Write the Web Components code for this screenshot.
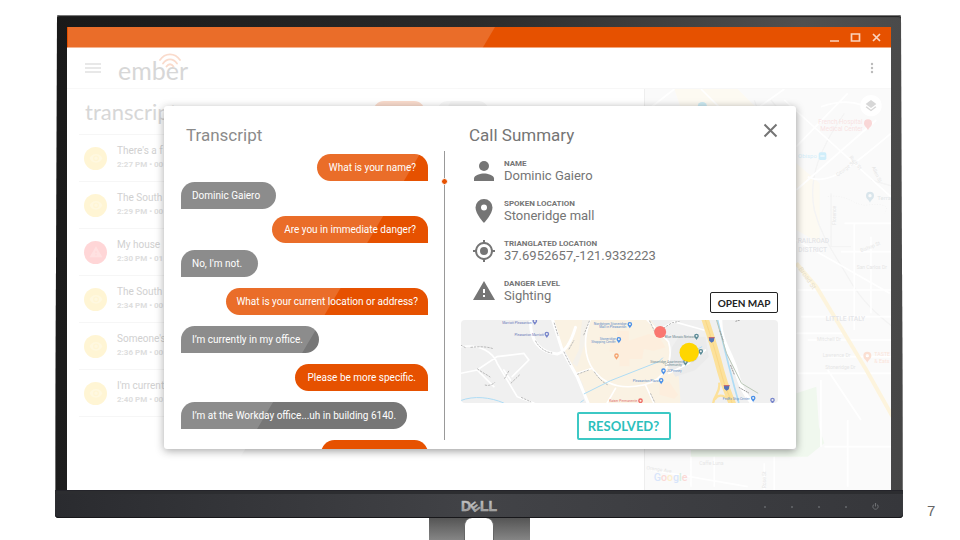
<!DOCTYPE html>
<html lang="en">
<head>
<meta charset="utf-8">
<meta name="viewport" content="width=device-width, initial-scale=1">
<title>ember</title>
<style>
    body { margin: 0; background: #fff; font-family: Roboto, "Liberation Sans", sans-serif; color: #777; }
</style>
</head>
<body>
<ember-slide page="7">
    <dell-monitor>
        <ember-window>
            <ember-header slot="header"></ember-header>
            <call-list slot="list" heading="transcripts">
                <call-item label="There's a f" meta="2:27 PM • 00"></call-item>
                <call-item label="The South" meta="2:29 PM • 00"></call-item>
                <call-item label="My house" meta="2:30 PM • 01" level="danger"></call-item>
                <call-item label="The South" meta="2:34 PM • 00"></call-item>
                <call-item label="Someone's" meta="2:36 PM • 00"></call-item>
                <call-item label="I'm current" meta="2:40 PM • 00"></call-item>
            </call-list>
            <city-map slot="map"></city-map>
            <call-dialog slot="dialog">
                <chat-bubble slot="chat" from="operator">What is your name?</chat-bubble>
                <chat-bubble slot="chat" from="caller" gap="tight">Dominic Gaiero</chat-bubble>
                <chat-bubble slot="chat" from="operator" gap="close">Are you in immediate danger?</chat-bubble>
                <chat-bubble slot="chat" from="caller" gap="close">No, I'm not.</chat-bubble>
                <chat-bubble slot="chat" from="operator" snug>What is your current location or address?</chat-bubble>
                <chat-bubble slot="chat" from="caller">I’m currently in my office.</chat-bubble>
                <chat-bubble slot="chat" from="operator">Please be more specific.</chat-bubble>
                <chat-bubble slot="chat" from="caller" snug>I’m at the Workday office...uh in building 6140.</chat-bubble>
                <chat-bubble slot="chat" from="operator" empty></chat-bubble>
                <call-fact icon="person" label="NAME">Dominic Gaiero</call-fact>
                <call-fact icon="place" label="SPOKEN LOCATION">Stoneridge mall</call-fact>
                <call-fact icon="target" label="TRIANGLATED LOCATION">37.6952657,-121.9332223</call-fact>
                <call-fact icon="warning" label="DANGER LEVEL">Sighting</call-fact>
            </call-dialog>
        </ember-window>
    </dell-monitor>
</ember-slide>

<script>
const ICONS = {
    person: '<circle cx="12" cy="7" r="5"/><path d="M2 22v-2.500c0-3.300 6.600-5 10-5s10 1.700 10 5V22z"/>',
    place: '<path fill-rule="evenodd" d="M12 0a8.500 8.500 0 0 0-8.500 8.500C3.500 15 12 24 12 24s8.500-9 8.500-15.500A8.500 8.500 0 0 0 12 0zm0 11.500a3 3 0 1 1 0-6 3 3 0 0 1 0 6z"/>',
    target: '<path d="M12 8a4 4 0 1 0 0 8 4 4 0 0 0 0-8zm8.940 3A9 9 0 0 0 13 3.060V1h-2v2.060A9 9 0 0 0 3.060 11H1v2h2.060A9 9 0 0 0 11 20.940V23h2v-2.060A9 9 0 0 0 20.940 13H23v-2zM12 19a7 7 0 1 1 0-14 7 7 0 0 1 0 14z"/>',
    warning: '<path d="M1 21h22L12 2zm12-3h-2v-2h2zm0-4h-2v-4h2z"/>',
    eye: '<path d="M12 5C7 5 2.700 8.100 1 12.500 2.700 16.900 7 20 12 20s9.300-3.100 11-7.500C21.300 8.100 17 5 12 5zm0 12.500a5 5 0 1 1 0-10 5 5 0 0 1 0 10zm0-8a3 3 0 1 0 0 6 3 3 0 0 0 0-6z"/>'
};

function icon(name) {
    return `<svg viewBox="0 0 24 24" fill="currentColor" aria-hidden="true">${ICONS[name]}</svg>`;
}

class EmberElement extends HTMLElement {
    constructor() {
        super();
        this.attachShadow({mode: 'open'});
    }

    connectedCallback() {
        this.shadowRoot.innerHTML = this.template();
    }
}

class EmberSlide extends EmberElement {
    template() {
        return `
            <style>
                :host { display: grid; grid-template-columns: 55px minmax(0, 1fr) 57px; height: 100vh;
                    min-height: 540px; box-sizing: border-box; padding-top: 15px; overflow: hidden; }
                .stage { grid-column: 2; }
                .page { align-self: end; padding: 0 0 20px 24px; font: 15px/18px "Liberation Sans", sans-serif; color: #666; }
            </style>
            <div class="stage"><slot></slot></div>
            <div class="page">${this.getAttribute('page')}</div>
        `;
    }
}

class DellMonitor extends EmberElement {
    template() {
        return `
            <style>
                :host { display: flex; flex-direction: column; height: 100%; position: relative; }
                .case { flex: 1; min-height: 0; display: flex; flex-direction: column; position: relative;
                    border-radius: 5px 5px 4px 4px; background: linear-gradient(100deg, #191919, #2b2b2b 45%, #505050 80%, #454545);
                    box-shadow: inset 0 0 0 1px #777, inset 0 2px 1px #222;
                    clip-path: polygon(2px 0, calc(100% - 2px) 0, 100% 100%, 0 100%); }
                .screen { flex: 1; min-height: 0; margin: 12px 12px 0 12px; overflow: hidden; }
                .chin { height: 28px; display: grid; grid-template-columns: 1fr auto 1fr; align-items: center;
                    background: linear-gradient(90deg, #2a2b2f, #424347 50%, #36373b); border-radius: 0 0 4px 4px;
                    border-top: 1px solid #24242a; box-sizing: border-box; box-shadow: inset 0 3px #2c2d30, inset 0 -1px #17171a; }
                .logo { width: 38px; height: 20px; margin-top: 3px; overflow: visible; }
                .keys { justify-self: end; display: flex; align-items: center; gap: 25px; padding: 4px 24px 0 0; }
                .keys i { width: 2px; height: 2px; border-radius: 50%; background: #66686c; }
                .keys svg { width: 7px; height: 7px; }
                .stand { height: 22px; width: 101px; margin-left: 374px; background: linear-gradient(#555, #858585); display: flex; justify-content: center; }
                .stand i { width: 28px; margin-right: 2px; background: #fff; border-radius: 8px 8px 0 0; border: solid #666; border-width: 0 1px; }
                /* light falling across the glass */
                .glare { position: absolute; inset: 12px 0 50px 13px; background: #fff; opacity: .16; pointer-events: none;
                    clip-path: polygon(0 0, 427px 0, 153px 100%, 0 100%); }
            </style>
            <div class="case">
                <div class="screen"><slot></slot></div>
                <div class="chin">
                    <span></span>
                    <svg class="logo" viewBox="0 0 38 20" role="img" aria-label="Dell">
                        <defs><linearGradient id="s" x2="0" y2="1"><stop offset="0" stop-color="#d5d5d5"/><stop offset="1" stop-color="#8c8c8c"/></linearGradient></defs>
                        <g fill="url(#s)" stroke="#b0b0b0" stroke-width=".5" font-family="Liberation Sans, sans-serif" font-weight="bold" font-size="14">
                            <text x="1" y="15">D</text>
                            <text x="11" y="15" font-size="12" transform="rotate(-38 15 11)">E</text>
                            <text x="20" y="15">LL</text>
                        </g>
                    </svg>
                    <div class="keys"><i></i><i></i><i></i><i></i>
                        <svg viewBox="0 0 8 8" fill="none" stroke="#77797d"><path d="M2.500 1.500a3 3 0 1 0 3 0M4 0v4"/></svg>
                    </div>
                </div>
            </div>
            <div class="stand"><i></i></div>
            <div class="glare"></div>
        `;
    }
}

class EmberWindow extends EmberElement {
    template() {
        return `
            <style>
                :host { display: flex; flex-direction: column; height: 100%; position: relative; background: #fff; }
                .bar { height: 20px; flex: none; background: #e65100; border-bottom: 1px solid #f3a67c; display: flex; justify-content: flex-end;
                    align-items: center; gap: 10px; padding-right: 9px; }
                .bar button { all: unset; width: 11px; height: 11px; display: flex; }
                .bar svg { width: 11px; height: 11px; fill: none; stroke: #fbd3bd; stroke-width: 1.700; }
                .body { flex: 1; min-height: 0; display: grid; grid-template-columns: 70fr 30fr; }
            </style>
            <div class="bar">
                <button aria-label="Minimize"><svg viewBox="0 0 11 11"><path d="M1 9h9"/></svg></button>
                <button aria-label="Maximize"><svg viewBox="0 0 11 11"><path d="M1.500 2h8v7h-8z"/></svg></button>
                <button aria-label="Close"><svg viewBox="0 0 11 11"><path d="M2 2l7 7M9 2l-7 7"/></svg></button>
            </div>
            <slot name="header"></slot>
            <div class="body">
                <slot name="list"></slot>
                <slot name="map"></slot>
            </div>
            <slot name="dialog"></slot>
        `;
    }
}

class EmberHeader extends EmberElement {
    template() {
        return `
            <style>
                :host { display: flex; align-items: center; height: 41px; flex: none; padding: 0 17px 0 18px;
                    border-bottom: 1px solid #f7f7f7; box-sizing: border-box; }
                button { all: unset; display: flex; }
                .brand { position: relative; margin-left: 17px; padding-top: 4px; font: 25px/30px Lato, sans-serif; color: #d0d0d0; }
                .brand svg { position: absolute; left: 41px; top: 2px; width: 22px; height: 16px; }
                .more { margin-left: auto; }
            </style>
            <button aria-label="Menu"><svg width="16" height="12" stroke="#dcdcdc" stroke-width="1.500"><path d="M0 2h16M0 6h16M0 10h16"/></svg></button>
            <div class="brand">ember
                <svg viewBox="0 0 22 16" fill="none" stroke="#f9d5c3" stroke-width="1.800" stroke-linecap="round"><path d="M1 7C6-.500 16-.500 21 7M4 10.500c4-5.500 10-5.500 14 0M7.500 13.500c2-3 5-3 7 0"/></svg>
            </div>
            <button class="more" aria-label="More"><svg width="4" height="12" fill="#bbb"><circle cx="2" cy="2" r="1.200"/><circle cx="2" cy="6" r="1.200"/><circle cx="2" cy="10" r="1.200"/></svg></button>
        `;
    }
}

class CallList extends EmberElement {
    template() {
        return `
            <style>
                :host { display: block; min-width: 0; padding: 0 12px; }
                .top { display: flex; align-items: center; gap: 12px; height: 46px; padding-left: 6px; border-bottom: 1px solid #f5f5f5;
                    box-sizing: border-box; }
                h1 { margin: 0; width: 276px; font: 22px/28px Lato, sans-serif; color: #d0d0d0; }
                .top i { width: 52px; height: 22px; border-radius: 11px; background: #f9d5c3; }
                .top i + i { background: #f6f6f6; }
            </style>
            <div class="top"><h1>${this.getAttribute('heading')}</h1><i></i><i></i></div>
            <slot></slot>
        `;
    }
}

class CallItem extends EmberElement {
    template() {
        const danger = this.getAttribute('level') === 'danger';
        return `
            <style>
                :host { display: flex; align-items: center; gap: 10px; height: 47px; padding-left: 5px; box-sizing: border-box;
                    border-bottom: 1px solid #f5f5f5; }
                .mark { width: 23px; height: 23px; border-radius: 50%; display: grid; place-items: center;
                    background: ${danger ? '#ffcfd0' : '#fff4cc'}; color: ${danger ? '#ffdcdc' : '#fff7da'}; }
                .mark svg { width: 14px; height: 14px; }
                b { display: block; font: 10px/14px Roboto, sans-serif; color: #c8c8c8; }
                small { display: block; font: bold 8px/14px Roboto, sans-serif; color: #d8d8d8; }
            </style>
            <div class="mark">${icon(danger ? 'warning' : 'eye')}</div>
            <div><b>${this.getAttribute('label')}</b><small>${this.getAttribute('meta')}</small></div>
        `;
    }
}

class CityMap extends EmberElement {
    template() {
        return `
            <style>
                :host { display: block; min-width: 0; min-height: 0; overflow: hidden; position: relative; border-left: 1px solid #eee; }
                svg { display: block; width: 100%; height: 100%; opacity: .85; }
                text { font-family: Roboto, sans-serif; }
            </style>
            <svg viewBox="12 27 741 1203" preserveAspectRatio="xMinYMin slice">
                <path fill="#fafafa" d="M12 27h800v1230H12z"/>
                <path fill="#fdf9f0" d="M100 27h190l60 60H120zM466 250l70 60v180l-70-40z"/>
                <path fill="#eef7ec" d="M466 940l60-20 8 120 16 50-50 40H150v-20h316z"/>
                <g fill="none" stroke="#f2f2f2" stroke-width="4">
                    <path d="M610 100c-70 100-110 190-90 290 20 80 60 130 100 200 50 90 110 130 160 170M390 60l40 50M690 300l70 20M570 340v160h60M340 60l20 60"/>
                </g>
                <g fill="none" stroke="#fff" stroke-width="5">
                    <path d="M20 90L100 27M180 27l160 160M300 120L430 27M430 60l330 300M466 330l240-210M466 200L620 40M540 80c60-20 120-20 160 20M500 290c60 30 120-20 250-130M640 430v320M470 630h290M480 710h280M500 780h260M560 830h200M470 880h290M560 870l100 150M610 430h140M600 515h150M690 470v230M466 480l280 160M540 900v200M30 1170l290 50M150 1130v90M220 1130v90M370 1150v80M400 1130v100M550 1100h200M620 1020v200M466 760h140"/>
                </g>
                <path fill="none" stroke="#fdf3d8" stroke-width="12" d="M466 550l60 70 60 100 90 150 90 160"/>
                <path fill="none" stroke="#eee" stroke-width="2" stroke-dasharray="4 4" d="M560 350c60-10 80 30 120 25s70 0 50 25"/>
                <g fill="#e2e2e2" font-size="15">
                    <text transform="translate(590 290) rotate(-38)">George St</text>
                    <text transform="translate(625 232) rotate(52)">Ruth St</text>
                    <text transform="translate(692 262) rotate(65)">Allen St</text>
                    <text transform="translate(660 517) rotate(-22)">Bishop St</text>
                    <text x="647" y="567">San Carlos Dr</text>
                    <text x="528" y="782">Mitchell Dr</text>
                    <text x="545" y="830">Lawrence Dr</text>
                    <text x="553" y="867">Stoneridge Dr</text>
                    <text x="175" y="1154">Caffe Luna</text>
                    <text transform="translate(16 1168) rotate(8)">Orange Ave</text>
                    <text transform="translate(375 1225) rotate(-90)">Rose St</text>
                    <text transform="translate(584 435) rotate(-90)">Florence</text>
                </g>
                <text transform="translate(472 567) rotate(55)" font-size="20" fill="#e6dcc6">Broad St</text>
                <g fill="#dfe1e5" font-size="20" font-weight="500">
                    <text x="470" y="490">RAILROAD</text>
                    <text x="472" y="515">DISTRICT</text>
                    <text x="554" y="722">LITTLE ITALY</text>
                </g>
                <g fill="#f7dede" font-size="19"><text x="532" y="132">French Hospital</text><text x="538" y="153">Medical Center</text></g>
                <path fill="#f8d0d0" d="M681 151c-4-10-12-12-12-21a12 12 0 0 1 24 0c0 9-8 11-12 21z"/>
                <text x="471" y="235" font-size="18" fill="#cdeaf7">Obispo</text>
                <rect x="533" y="217" width="23" height="23" rx="5" fill="#c8ebfa"/><path stroke="#fff" stroke-width="3" d="M538 228h13"/>
                <circle cx="184" cy="80" r="14" fill="#c5e8f2"/>
                <path fill="#d3e1e8" fill-rule="evenodd" d="M687 368c-4-10-12-12-12-21a12 12 0 0 1 24 0c0 9-8 11-12 21zm0-26a5 5 0 1 0 0 10 5 5 0 0 0 0-10z"/>
                <text x="709" y="361" font-size="18" fill="#dde3e6">Terra</text>
                <path fill="#fbdacb" fill-rule="evenodd" d="M679 848c-4-10-12-12-12-21a12 12 0 0 1 24 0c0 9-8 11-12 21zm0-26a5 5 0 1 0 0 10 5 5 0 0 0 0-10z"/>
                <g fill="#fae0d4" font-size="16"><text x="700" y="829">TASTE</text><text x="700" y="850">&amp; Eats</text></g>
                <circle cx="690" cy="77" r="32" fill="#fff"/>
                <g fill="#d0d0d0"><path d="M690 60l16 12-16 12-16-12z"/><path d="M677 79l13 10 13-10 3 3-16 12-16-12z"/></g>
                <text x="38" y="1204" font-size="32" font-weight="500" fill="#d2e1fb">G<tspan fill="#fad3d0">o</tspan><tspan fill="#fdedc4">o</tspan><tspan>g</tspan><tspan fill="#d2ecd7">l</tspan><tspan fill="#fad3d0">e</tspan></text>
            </svg>
        `;
    }
}

class ChatBubble extends EmberElement {
    template() {
        return `
            <style>
                :host { display: flex; align-items: center; flex: none; align-self: flex-start; height: 27px; margin-top: 11px;
                    box-sizing: border-box; padding: 0 16px 0 11px; border-radius: 14px 14px 14px 0; background: #777; color: #fff;
                    font-size: 10px; line-height: 14px; white-space: nowrap; }
                :host([from="operator"]) { align-self: flex-end; padding: 0 12px; border-radius: 14px 14px 0 14px; background: #e65100; }
                :host([snug]) { padding: 0 11px; }
                :host([from="operator"][snug]) { padding: 0 10px; }
                :host([gap="tight"]) { margin-top: 1px; }
                :host([gap="close"]) { margin-top: 7px; }
                :host(:first-child) { margin-top: 0; }
                :host([empty]) { width: 107px; }
            </style>
            <slot></slot>
        `;
    }
}

class CallFact extends EmberElement {
    template() {
        return `
            <style>
                :host { display: grid; grid-template-columns: 24px 1fr; column-gap: 8px; align-items: center; height: 40px; color: #757575; }
                svg { width: 24px; height: 24px; }
                small { display: block; font: bold 8px/8px Roboto, sans-serif; }
                span { display: block; font-size: 13px; line-height: 15px; }
            </style>
            ${icon(this.getAttribute('icon'))}
            <div><small>${this.getAttribute('label')}</small><span><slot></slot></span></div>
        `;
    }
}

class MallMap extends EmberElement {
    template() {
        const pin = (x, y, color) => `<path fill="${color}" fill-rule="evenodd" d="M${x} ${y + 11}c-2-5-7-7-7-12a7 7 0 0 1 14 0c0 5-5 7-7 12zm0-15a3 3 0 1 0 0 6 3 3 0 0 0 0-6z"/>`;
        return `
            <style>
                :host { display: block; border-radius: 4px; overflow: hidden; }
                svg { display: block; width: 100%; height: 100%; }
                text { font-family: Roboto, sans-serif; font-size: 10px; }
            </style>
            <svg viewBox="15 30 954 249" preserveAspectRatio="xMidYMid slice">
                <path fill="#f0f0f0" d="M15 30h954v249H15z"/>
                <path fill="#faf2e3" d="M295 30h290l50 60 35 110 5 79H400l-20-60-70-130z"/>
                <path fill="#f0f0f0" d="M400 30h-20l-10 90-20 40 15 10 30-90z" opacity=".6"/>
                <path fill="#fdeedd" d="M465 95l20-5v-28h35v30l60-20 35 15 15 25-35 10-30-5-5 30h-38v22h-30v-40l-30-5zM612 222l28-8 28 40-12 12-44-12z"/>
                <path fill="#ebebeb" d="M640 170l10-60 20-30h80l10 60-40 40-60 20z"/>
                <g fill="none" stroke="#fff" stroke-linecap="round">
                    <path stroke-width="9" d="M290 25l30 95 45 80 35 85M225 35c0 50 20 90 80 97 20-5 40-30 55-80"/>
                    <path stroke-width="5" d="M404 30c-20 50-20 110 10 150 30 40 80 60 150 45s90-80 75-130L575 30M365 190l45-15M480 235l-25 44M570 225l25 54M600 65l55-30 90 25M640 190l60-30 50-40M15 110c60-10 100 20 110 50l60 100 50 19M15 190l50-10 60-40 80-10 15 20-50 50M65 180l50 50M145 180l20 30"/>
                </g>
                <g fill="none" stroke="#b8b8b8" stroke-width="3" stroke-dasharray="7 3">
                    <path d="M15 105l15 8M45 112c30-3 50-2 68 4M65 176c15 12 30 18 40 26M88 225c12 4 25-2 30-8M147 206l14-25M166 220l28-27M197 262l30 14M296 38l12 40M325 125l20 40M240 92c8 18 30 36 50 37M340 118l16-28M365 193l35-13M416 185c12 18 25 32 42 40M402 32l-18 45M582 32l18 38M615 60l35-22 22-4M585 250l13 28"/>
                </g>
                <path fill="none" stroke="#fff" stroke-width="12" d="M795 25c-5 60 30 100 45 150 15 60 30 80 50 104"/>
                <path fill="none" stroke="#fce19b" stroke-width="22" d="M748 25c20 60 35 110 48 160s25 70 36 100"/>
                <path fill="none" stroke="#f8d27c" stroke-width="2" d="M748 25c20 60 35 110 48 160s25 70 36 100"/>
                <path fill="none" stroke="#fce19b" stroke-width="7" d="M791 218c5 30-15 35-18 62M778 268c12-20 35-10 45 8"/>
                <path fill="none" stroke="#aedcf5" stroke-width="5" d="M785 25c15 60 30 130 65 254"/>
                <path fill="none" stroke="#aedcf5" stroke-width="3" d="M385 252l80-40 145-57 12-12M680 140l60-30M15 272c40-16 90-10 130 7M375 277l10-7"/>
                <path fill="none" stroke="#b9c6b6" stroke-width="3" d="M783 30l30 100 45 90 50 30"/>
                <g fill="none" stroke="#999" stroke-width="3" stroke-dasharray="6 2"><path d="M793 62l11 32M825 165l12 30M850 232l30 17M840 34l13-4"/></g>
                <g fill="#6b78b8">
                    <text x="140" y="41">Marriott Pleasanton</text>
                    <text x="177" y="77">Pleasanton Marriott</text>
                </g>
                <g fill="#5e8cc8">
                    <text x="415" y="44">Nordstrom Stoneridge</text><text x="431" y="54">Mall in Pleasanton</text>
                    <text x="433" y="90">Stoneridge</text><text x="407" y="100">Shopping Center</text>
                    <text x="634" y="187">JCPenney</text><text x="532" y="216">Pleasanton Plaza</text>
                    <text x="802" y="269">FedEx Ship Center</text>
                </g>
                <g fill="#6d8890">
                    <text x="628" y="84">Blue Mosaic Network</text>
                    <text x="584" y="158">Stoneridge Apartment</text><text x="628" y="168">Community</text>
                </g>
                <text x="461" y="276" fill="#e0716d">Kaiser Permanente</text>
                ${pin(238, 34, '#7986cb')}${pin(274, 73, '#7986cb')}${pin(523, 44, '#4a90e8')}${pin(490, 89, '#4a90e8')}
                ${pin(483, 138, '#f5a26f')}${pin(624, 183, '#4a90e8')}${pin(617, 212, '#4a90e8')}${pin(723, 79, '#5b8b97')}
                ${pin(736, 125, '#5b8b97')}${pin(690, 156, '#5b8b97')}${pin(893, 265, '#4a90e8')}${pin(951, 271, '#7986cb')}${pin(555, 273, '#ee6b66')}
                <g fill="#5374b8"><path d="M760 82l17-1-2 13-7 4-7-6zM805 226l17-1-2 13-7 4-7-6z"/></g>
                <path stroke="#d86868" stroke-width="3" d="M760 83h17M805 227h17"/>
                <circle cx="614" cy="66" r="18" fill="#fa7770"/>
                <circle cx="702" cy="129" r="29" fill="#000" opacity=".12"/>
                <circle cx="701" cy="127" r="29" fill="#ffd600"/>
            </svg>
        `;
    }
}

class CallDialog extends EmberElement {
    template() {
        return `
            <style>
                :host { position: absolute; inset: 79px 95px 41px 97px; display: grid; grid-template-columns: 264px 33px minmax(0, 1fr);
                    background: #fff; border-radius: 3px; box-shadow: 0 2px 8px rgba(0, 0, 0, .4); }
                h2 { margin: 0; font: 17px/24px Roboto, sans-serif; color: #757575; }
                .chat { display: flex; flex-direction: column; min-height: 0; overflow: hidden; padding: 17px 0 0 17px; }
                .chat h2 { padding: 0 0 7px 5px; }
                .log { display: flex; flex-direction: column; flex: 1; min-height: 0; overflow: hidden; }
                .track { justify-self: center; width: 1px; margin: 45px 0 9px; background: #999; display: flex; justify-content: center; }
                .track i { flex: none; width: 5px; height: 5px; margin-top: 27px; border: 1px solid #fff; border-radius: 50%; background: #e65100; }
                .summary { display: flex; flex-direction: column; padding: 17px 18px 9px 0; }
                header { display: flex; justify-content: space-between; padding-left: 8px; }
                button { font-family: Lato, sans-serif; font-weight: bold; background: #fff; border-radius: 2px; padding: 0; cursor: pointer; }
                .close { border: 0; width: 15px; height: 15px; display: flex; }
                .row { display: flex; align-items: flex-end; }
                .facts { flex: 1; min-width: 0; padding: 4px 0 9px 11px; }
                .open { width: 68px; height: 21px; margin-bottom: 7px; border: 1px solid #222; color: #222; font-size: 10px; }
                mall-map { height: 83px; }
                .resolve { align-self: center; width: 94px; height: 28px; margin: 9px 0 0 8px; border: 2px solid #3cc8c4; color: #2bc0bc; font-size: 13px; }
            </style>
            <section class="chat">
                <h2>Transcript</h2>
                <div class="log"><slot name="chat"></slot></div>
            </section>
            <div class="track"><i></i></div>
            <section class="summary">
                <header>
                    <h2>Call Summary</h2>
                    <button class="close" aria-label="Close"><svg width="15" height="15" stroke="#757575" stroke-width="2"><path d="M1.500 1.500l12 12M13.500 1.500l-12 12"/></svg></button>
                </header>
                <div class="row">
                    <div class="facts"><slot></slot></div>
                    <button class="open">OPEN MAP</button>
                </div>
                <mall-map></mall-map>
                <button class="resolve">RESOLVED?</button>
            </section>
        `;
    }
}

customElements.define('ember-slide', EmberSlide);
customElements.define('dell-monitor', DellMonitor);
customElements.define('ember-window', EmberWindow);
customElements.define('ember-header', EmberHeader);
customElements.define('call-list', CallList);
customElements.define('call-item', CallItem);
customElements.define('city-map', CityMap);
customElements.define('chat-bubble', ChatBubble);
customElements.define('call-fact', CallFact);
customElements.define('mall-map', MallMap);
customElements.define('call-dialog', CallDialog);
</script>
</body>
</html>
